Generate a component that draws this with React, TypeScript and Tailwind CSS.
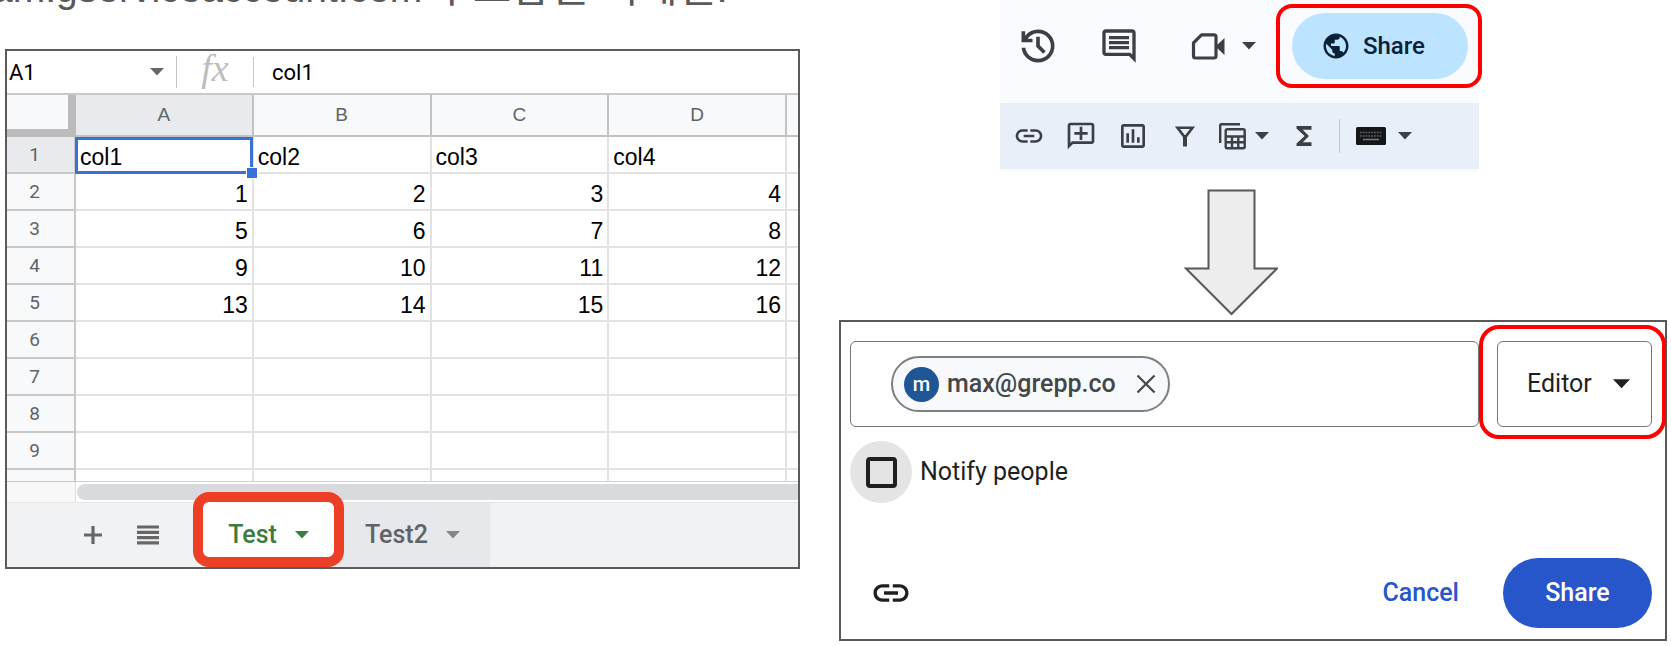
import {
  MdFunctions,
  MdLink,
  MdOutlineAddComment,
  MdOutlineInsertChart,
  MdOutlineInsertComment,
  MdPublic,
} from "react-icons/md";


const columns = ["A", "B", "C", "D"];

const rows = [
  ["col1", "col2", "col3", "col4"],
  ["1", "2", "3", "4"],
  ["5", "6", "7", "8"],
  ["9", "10", "11", "12"],
  ["13", "14", "15", "16"],
  ["", "", "", ""],
  ["", "", "", ""],
  ["", "", "", ""],
  ["", "", "", ""],
];


function Caret({ className = "h-2 w-[14px]" }: { className?: string }) {
  return (
    <svg
      viewBox="0 0 14 8"
      fill="currentColor"
      className={`shrink-0 ${className}`}
      aria-hidden="true"
    >
      <path d="M0 0h14L7 7.5z" />
    </svg>
  );
}


function HistoryIcon() {
  return (
    <svg
      viewBox="0 -960 960 960"
      width="44"
      height="44"
      fill="currentColor"
      aria-hidden="true"
    >
      <path d="M480-120q-138 0-240.500-91.500T122-440h82q14 104 92.500 172T480-200q117 0 198.500-81.500T760-480q0-117-81.500-198.500T480-760q-69 0-129 32t-101 88h110v80H120v-240h80v94q51-64 124.500-99T480-840q75 0 140.500 28.500t114 77q48.500 48.500 77 114T840-480q0 75-28.500 140.500t-77 114q-48.500 48.500-114 77T480-120Zm112-192L440-464v-216h80v184l128 128-56 56Z" />
    </svg>
  );
}


function VideoIcon() {
  return (
    <svg viewBox="0 0 40 40" width="40" height="40" aria-hidden="true">
      <path
        d="M13.500 8.800H26a2 2 0 0 1 2 2V30a2 2 0 0 1-2 2H7.500a2 2 0 0 1-2-2V16.800z"
        fill="none"
        stroke="currentColor"
        strokeWidth="3.200"
        strokeLinejoin="round"
      />
      <path d="M27.500 20.500L36.500 12v17z" fill="currentColor" />
    </svg>
  );
}


function FilterIcon() {
  return (
    <svg viewBox="0 0 32 32" width="32" height="32" aria-hidden="true">
      <path
        d="M8.500 7.800h15L16 17.500z"
        fill="none"
        stroke="currentColor"
        strokeWidth="2.600"
      />
      <path d="M16 15v11.500" stroke="currentColor" strokeWidth="4" />
    </svg>
  );
}


function TableViewIcon() {
  return (
    <svg
      viewBox="0 0 32 32"
      width="32"
      height="32"
      fill="none"
      stroke="currentColor"
      strokeWidth="2.400"
      aria-hidden="true"
    >
      <path d="M3.200 23V5.200a1 1 0 0 1 1-1H23" />
      <rect x="8.700" y="9.200" width="19" height="19" rx="1.500" />
      <path d="M8.700 16.500h19M8.700 22.300h19M15 16.500v11.700M21.300 16.500v11.700" />
    </svg>
  );
}


function KeyboardIcon() {
  return (
    <svg viewBox="0 0 30 18" width="30" height="18" aria-hidden="true">
      <rect width="30" height="18" rx="1.500" fill="#151618" />
      <path
        d="M4 5.500h22M4 9h22"
        stroke="#5c5f64"
        strokeWidth="1.500"
        strokeDasharray="1.800 1"
      />
      <path d="M7 12.500h16" stroke="#777a80" strokeWidth="1.500" />
    </svg>
  );
}


function Spreadsheet() {
  return (
    <section className="border-2 border-[#595b5d] bg-white">

      {/* Name box and formula bar */}
      <div className="flex h-11 items-center border-b-2 border-[#c9c9c9] font-[Roboto,sans-serif] text-[22px]">
        <div className="flex h-8 w-[170px] items-center border-r border-[#c4c4c4] pr-3 pl-[2px]">
          <input
            aria-label="Name box"
            defaultValue="A1"
            className="min-w-0 flex-1 outline-none"
          />
          <Caret className="h-2 w-[14px] text-[#666]" />
        </div>
        <span className="w-[76px] pb-2 text-center font-['Liberation_Serif',serif] text-[38px] leading-8 text-[#bdbdbd] italic">
          fx
        </span>
        <input
          aria-label="Formula"
          defaultValue="col1"
          className="h-[30px] min-w-0 flex-1 border-l border-[#c4c4c4] pl-[18px] outline-none"
        />
      </div>

      {/* Cells */}
      <table className="w-full table-fixed border-separate border-spacing-0">
        <colgroup>
          <col className="w-[69px]" />
          <col />
          <col />
          <col />
          <col />
          <col className="w-[11px]" />
        </colgroup>

        <thead>
          <tr className="h-[42px] font-['Liberation_Sans',sans-serif] text-[19px] text-[#5f6368]">
            <td className="border-r-8 border-b-8 border-[#bcbcbc] bg-[#f8f9fb]" />
            {columns.map((column) => (
              <th
                key={column}
                className={`border-r-2 border-b-2 border-[#c2c2c2] p-0 font-normal ${
                  column === "A" ? "bg-[#e8eaed]" : "bg-[#f8f9fb]"
                }`}
              >
                {column}
              </th>
            ))}
            <td className="border-b-2 border-[#c2c2c2] bg-[#f8f9fb]" />
          </tr>
        </thead>

        <tbody className="font-['Liberation_Sans',sans-serif] text-[23px] leading-7 text-black">
          {rows.map((row, index) => (
            <tr key={index} className="h-[37px]">
              <th
                className={`border-r-2 border-b-2 border-[#c8c8c8] py-0 pr-3 pl-0 font-[Roboto,sans-serif] text-[19px] font-normal text-[#5f6368] ${
                  index === 0 ? "bg-[#e8eaed]" : "bg-[#f8f9fb]"
                }`}
              >
                {index + 1}
              </th>

              {row.map((cell, cellIndex) => (
                <td
                  key={cellIndex}
                  className={`relative border-r-2 border-b-2 border-[#e2e2e2] px-1 pt-1 pb-0 ${
                    index === 0 ? "text-left" : "text-right"
                  }`}
                >
                  {cell}
                  {index === 0 && cellIndex === 0 && (
                    <span className="absolute -inset-x-px inset-y-0 -bottom-[2px] z-10 border-[3px] border-[#3b70db]">
                      <span className="absolute -right-2 -bottom-2 size-3 border border-white bg-[#3b70db]" />
                    </span>
                  )}
                </td>
              ))}

              <td className="border-b-2 border-[#e2e2e2]" />
            </tr>
          ))}

          <tr className="h-3">
            <td className="border-r-2 border-b border-[#c8c8c8] bg-[#f8f9fb]" />
            {columns.map((column) => (
              <td
                key={column}
                className="border-r-2 border-b border-r-[#e2e2e2] border-b-[#cfd0d2]"
              />
            ))}
            <td className="border-b border-[#cfd0d2]" />
          </tr>
        </tbody>
      </table>

      {/* Horizontal scrollbar */}
      <div className="flex h-[21px] border-b border-[#e4e5e7]">
        <div className="w-[69px] border-r border-[#dcdcdc] bg-[#f8f8f8]" />
        <div className="my-[2px] ml-px flex-1 rounded-l-full bg-[#d9dade]" />
      </div>

      {/* Sheet tabs */}
      <div className="flex h-[64px] items-center bg-[#f0f2f4] pl-[77px] font-[Roboto,sans-serif] text-[25px] font-medium">
        <button aria-label="Add sheet" className="text-[#666]">
          <svg viewBox="0 0 18 18" width="18" height="18" aria-hidden="true">
            <path d="M9 0v18M0 9h18" stroke="currentColor" strokeWidth="3.200" />
          </svg>
        </button>
        <button aria-label="All sheets" className="ml-[35px] text-[#666]">
          <svg viewBox="0 0 22 20" width="22" height="20" aria-hidden="true">
            <path
              d="M0 2h22M0 7.300h22M0 12.600h22M0 17.900h22"
              stroke="currentColor"
              strokeWidth="3.200"
            />
          </svg>
        </button>
        <button className="z-10 -mt-[11px] ml-[34px] flex h-[75px] w-[151px] shrink-0 items-center justify-center gap-[18px] rounded-2xl border-[10px] border-[#ec3f25] bg-white pt-[10px] text-[#3a7d3e]">
          Test
          <Caret />
        </button>
        <button className="-ml-5 flex h-full w-[166px] shrink-0 items-center gap-[18px] bg-[#e6e8ec] pl-[41px] text-[#5f6368]">
          Test2
          <Caret className="h-2 w-[14px] text-[#84868a]" />
        </button>
      </div>

    </section>
  );
}


function Toolbar() {
  return (
    <section className="ml-[161px] w-[479px] bg-[#f9fbff] pb-[3px] text-[#3c3f43]">

      <div className="flex h-[103px] items-center pb-[11px] pl-4">
        <button aria-label="Version history">
          <HistoryIcon />
        </button>
        <button aria-label="Comments" className="ml-[39px]">
          <MdOutlineInsertComment size={40} />
        </button>
        <button aria-label="Join a call" className="ml-[49px] flex items-center gap-[14px]">
          <VideoIcon />
          <Caret />
        </button>
        <div className="ml-5 shrink-0 rounded-2xl border-4 border-[#ff0000] py-[5px] pr-[10px] pl-3">
          <button className="flex h-[66px] w-[176px] items-center gap-3 rounded-full bg-[#bce3ff] pl-[29px] font-[Roboto,sans-serif] text-[24px] font-medium text-[#0b2136]">
            <MdPublic size={30} />
            Share
          </button>
        </div>
      </div>

      <div className="flex h-[66px] items-center gap-5 bg-[#e9eff9] pl-[13px]">
        <button aria-label="Insert link">
          <MdLink size={32} />
        </button>
        <button aria-label="Insert comment">
          <MdOutlineAddComment size={32} className="-scale-x-100" />
        </button>
        <button aria-label="Insert chart">
          <MdOutlineInsertChart size={32} />
        </button>
        <button aria-label="Create a filter">
          <FilterIcon />
        </button>
        <button aria-label="Filter views" className="-ml-1 flex items-center gap-[6px]">
          <TableViewIcon />
          <Caret />
        </button>
        <button aria-label="Functions">
          <MdFunctions size={30} />
        </button>
        <button
          aria-label="Input tools"
          className="flex h-[34px] items-center gap-3 border-l border-[#c3c7cc] pl-4"
        >
          <KeyboardIcon />
          <Caret />
        </button>
      </div>

    </section>
  );
}


function ShareDialog() {
  return (
    <section className="border-2 border-[#595959] bg-white pt-[19px] pr-[13px] pb-[11px] pl-[9px] font-[Roboto,sans-serif] text-[25px] text-[#1f1f1f]">

      {/* People and role */}
      <div className="flex gap-[18px]">
        <div className="flex h-[86px] min-w-0 flex-1 items-center rounded-md border border-[#747775] pl-10">
          <div className="flex h-[56px] shrink-0 items-center rounded-full border-2 border-[#7d7f81] bg-[#f7f9fd] pr-3 pl-[11px] font-medium text-[#444746]">
            <span className="flex size-[35px] items-center justify-center rounded-full bg-[#1f5796] text-[20px] text-white">
              m
            </span>
            <span className="ml-2">max@grepp.co</span>
            <button aria-label="Remove max@grepp.co" className="ml-5">
              <svg viewBox="0 0 20 20" width="20" height="20" aria-hidden="true">
                <path
                  d="M1.500 1.500l17 17M18.500 1.500l-17 17"
                  stroke="currentColor"
                  strokeWidth="2.200"
                />
              </svg>
            </button>
          </div>
          <input aria-label="Add people" className="min-w-0 flex-1 outline-none" />
        </div>

        <div className="relative w-[155px] shrink-0">
          <select
            aria-label="Role"
            className="h-full w-full appearance-none rounded-md border border-[#747775] bg-white pl-[29px] outline-none"
          >
            <option>Editor</option>
          </select>
          <Caret className="pointer-events-none absolute top-[38px] right-[22px] h-[10px] w-[17px]" />
          <span className="pointer-events-none absolute -top-4 -right-[14px] -bottom-3 -left-[18px] rounded-[20px] border-4 border-[#ff0000]" />
        </div>
      </div>

      {/* Notify */}
      <label className="mt-[14px] flex items-center gap-2">
        <span className="flex size-[62px] items-center justify-center rounded-full bg-[#e4e4e4]">
          <input
            type="checkbox"
            className="size-[31px] appearance-none rounded-[4px] border-4 border-[#1f1f1f]"
          />
        </span>
        Notify people
      </label>

      {/* Actions */}
      <div className="mt-[55px] flex items-center font-medium">
        <button aria-label="Copy link" className="ml-5">
          <MdLink size={42} />
        </button>
        <button className="ml-auto font-medium text-[#2756cb]">Cancel</button>
        <button className="ml-11 h-[70px] w-[149px] rounded-full bg-[#2756cb] text-white">
          Share
        </button>
      </div>

    </section>
  );
}


export default function App() {
  return (
    <main className="grid grid-cols-[795fr_828fr] items-start gap-[39px] overflow-hidden bg-white pr-1 pb-1 pl-[5px]">

      <div className="min-w-0">
        <h1 className="-mt-8 -ml-[14px] h-[81px] font-['Liberation_Sans','Noto_Sans_CJK_KR',sans-serif] text-[39px] leading-10 whitespace-nowrap text-[#595959]">
          am.gserviceaccount.com
          <span className="text-[42px]">가 포함된 이메일:</span>
        </h1>
        <Spreadsheet />
      </div>

      <div className="min-w-0">
        <Toolbar />
        <svg
          viewBox="0 0 94 128"
          width="94"
          height="128"
          className="mt-4 mb-1 ml-[345px]"
          aria-hidden="true"
        >
          <path
            d="M24.500 2.500h46v78h22.500L47.500 126 2 80.500h22.500z"
            fill="#ededed"
            stroke="#595959"
            strokeWidth="2"
          />
        </svg>
        <ShareDialog />
      </div>

    </main>
  );
}
